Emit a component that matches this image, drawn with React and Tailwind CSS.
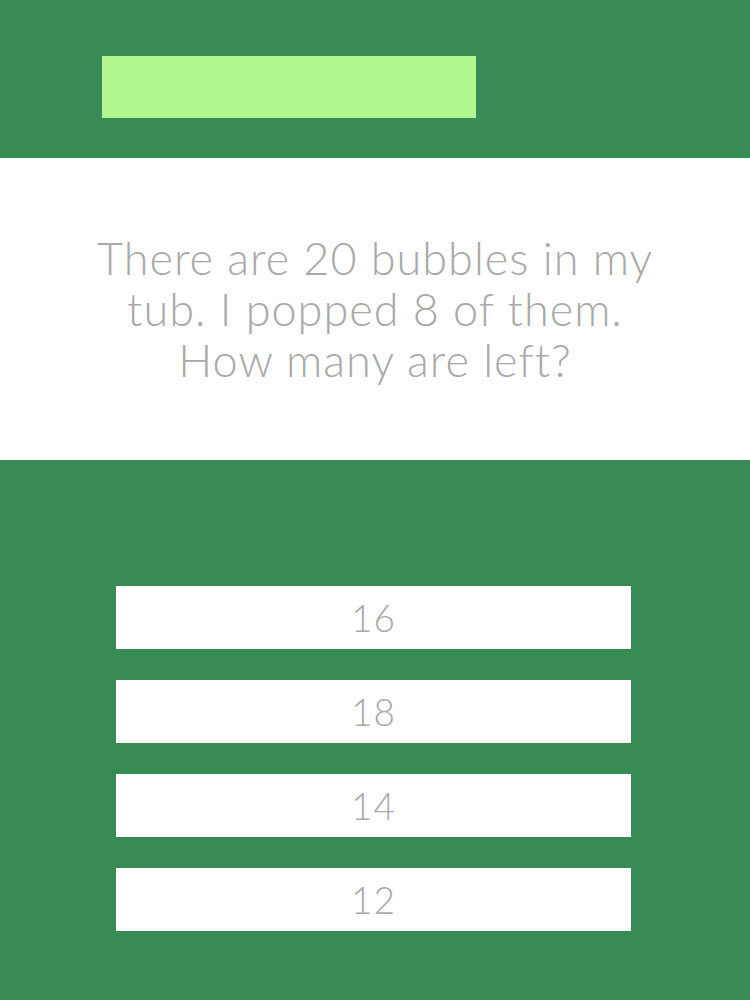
import React from "react";

const answers = ["16", "18", "14", "12"];

export default function App() {
  return (
    <div className="min-h-[1000px] w-[750px] bg-[#398b55] font-['Lato','Liberation_Sans',sans-serif]">
      <div className="h-[158px] pt-[56px] pl-[102px]">
        <div className="w-[374px] h-[62px] bg-[#b1f68f]" />
      </div>

      <div className="h-[302px] bg-white flex items-center justify-center">
        <p className="text-center text-[45px] leading-[51px] tracking-[1px] font-light text-[#a9a9a9]">
          There are 20 bubbles in my
          <br />
          tub. I popped 8 of them.
          <br />
          How many are left?
        </p>
      </div>

      <div className="flex flex-col gap-[31px] pt-[126px] pl-[116px]">
        {answers.map((a) => (
          <button
            key={a}
            className="h-[63px] w-[515px] bg-white flex items-center justify-center text-[37px] tracking-[1px] font-light text-[#a9a9a9]"
          >
            {a}
          </button>
        ))}
      </div>
    </div>
  );
}
